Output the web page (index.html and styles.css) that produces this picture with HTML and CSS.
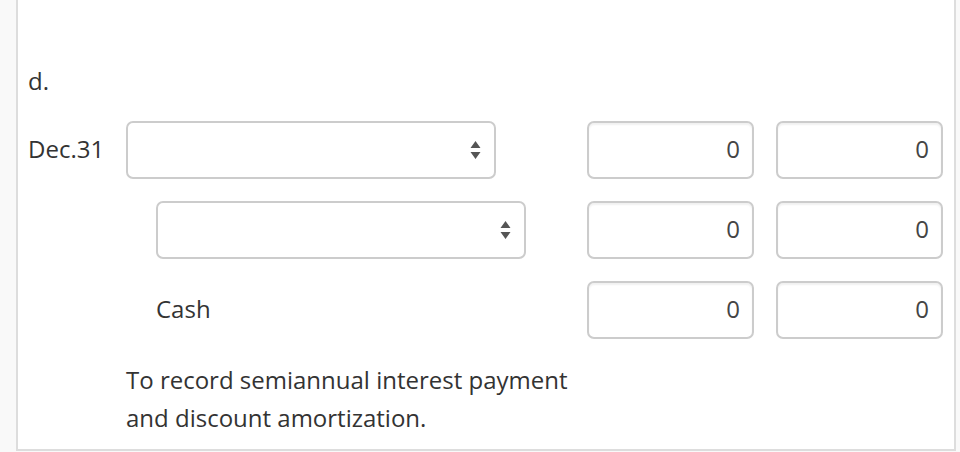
FILE: index.html
```html
<!DOCTYPE html>
<html>
<head>
<meta charset="utf-8">
<link rel="stylesheet" href="styles.css">
</head>
<body>
<div class="panel">
  <div class="part">d.</div>
  <div class="entry">
    <div class="row">
      <div class="left">
        <span class="date">Dec.31</span>
        <div class="select"><svg class="caret" width="11" height="19" viewBox="0 0 11 19"><path d="M5.5 0 L10.5 7 L0.5 7 Z M0.5 11 L10.5 11 L5.5 18 Z" fill="#555"/></svg></div>
      </div>
      <div class="amounts">
        <div class="num">0</div>
        <div class="num">0</div>
      </div>
    </div>
    <div class="row">
      <div class="left indent">
        <div class="select"><svg class="caret" width="11" height="19" viewBox="0 0 11 19"><path d="M5.5 0 L10.5 7 L0.5 7 Z M0.5 11 L10.5 11 L5.5 18 Z" fill="#555"/></svg></div>
      </div>
      <div class="amounts">
        <div class="num">0</div>
        <div class="num">0</div>
      </div>
    </div>
    <div class="row">
      <div class="left indent">
        <span class="acct">Cash</span>
      </div>
      <div class="amounts">
        <div class="num">0</div>
        <div class="num">0</div>
      </div>
    </div>
  </div>
  <p class="memo">To record semiannual interest payment<br>and discount amortization.</p>
</div>
</body>
</html>
```
FILE: styles.css
```css
html, body {
  margin: 0;
  padding: 0;
  background: #f9f9f9;
}
body {
  font-family: "Open Sans", "Liberation Sans", sans-serif;
  font-size: 24px;
  color: #333;
}
.panel {
  margin-left: 16px;
  background: #fff;
  border: 2px solid #ddd;
  border-top: none;
  padding: 62px 0 12px 10px;
  box-sizing: content-box;
  width: 926px;
  height: 375px;
}
.part {
  line-height: 38px;
  height: 38px;
}
.entry {
  margin-top: 21px;
  display: flex;
  flex-direction: column;
  gap: 22px;
}
.row {
  display: flex;
  align-items: center;
  height: 58px;
}
.left {
  flex: 1;
  display: flex;
  align-items: center;
}
.left.indent {
  padding-left: 128px;
}
.date,
.acct {
  padding-bottom: 3px;
}
.date {
  width: 98px;
}
.select {
  width: 370px;
  height: 58px;
  box-sizing: border-box;
  border: 2px solid #ccc;
  border-radius: 7px;
  display: flex;
  align-items: center;
  justify-content: flex-end;
  padding-right: 13px;
}
.caret {
  display: block;
  margin-top: 1px;
}
.amounts {
  display: flex;
  gap: 22px;
  padding-right: 11px;
}
.num {
  width: 167px;
  height: 58px;
  box-sizing: border-box;
  border: 2px solid #ccc;
  border-radius: 7px;
  box-shadow: inset 0 2px 2px rgba(0,0,0,0.06);
  text-align: right;
  padding-right: 12px;
  line-height: 52px;
  color: #444;
}
.memo {
  margin: 22px 0 0 98px;
  line-height: 38px;
}
```
